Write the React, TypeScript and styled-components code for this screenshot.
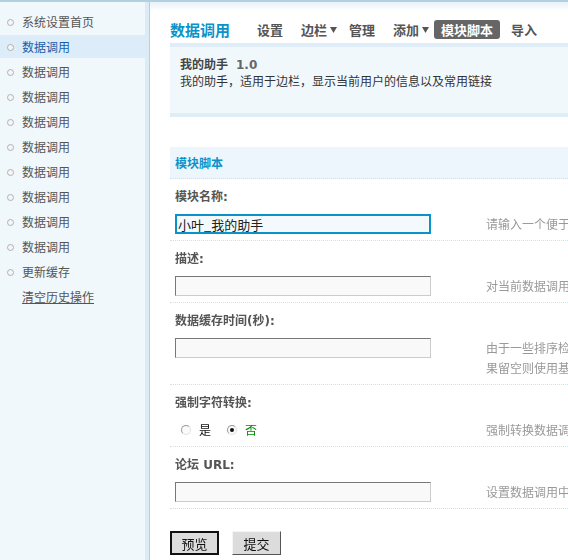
import React from "react";
import styled, { createGlobalStyle } from "styled-components";

const GlobalStyle = createGlobalStyle`
  html, body {
    margin: 0;
    padding: 0;
    overflow: hidden;
  }
  body {
    font-family: "DejaVu Sans", "Noto Sans CJK SC", sans-serif;
    font-size: 12px;
    color: #555;
    background: #fff;
  }
`;

const Page = styled.div`
  display: flex;
  min-height: 100vh;
  width: 900px;
  border-top: 2px solid #b4cfe0;
  background: linear-gradient(#e6f2f9, rgba(255, 255, 255, 0) 9px) top left / 100% 9px no-repeat;
`;

const Sidebar = styled.div`
  width: 149px;
  flex-shrink: 0;
  padding-top: 8px;
  border-right: 1px solid #b5d1e1;
  background: linear-gradient(to right, #f0f8fc 145px, #dcecf7 145px);
`;

const MenuList = styled.ul`
  list-style: none;
  margin: 0;
  padding: 0;
  width: 145px;
`;

const MenuItem = styled.li<{ $active?: boolean; $plain?: boolean }>`
  display: flex;
  align-items: center;
  height: 23px;
  margin-bottom: 2px;
  padding-left: 7px;
  font-family: "Noto Sans CJK SC", sans-serif;
  font-size: 12px;
  color: ${(p) => (p.$active ? "#1a5ea8" : "#555")};
  background: ${(p) => (p.$active ? "#dcecf8" : "transparent")};
  text-decoration: ${(p) => (p.$plain ? "underline" : "none")};
  padding-left: ${(p) => (p.$plain ? "22px" : "7px")};
`;

const Bullet = styled.span`
  width: 5px;
  height: 5px;
  border: 1px solid #b0b0b0;
  border-radius: 50%;
  background: #f6f6f6;
  margin-right: 8px;
  margin-top: 1px;
`;

const Main = styled.div`
  width: 640px;
  padding-left: 20px;
`;

const Header = styled.div`
  display: flex;
  align-items: flex-end;
  height: 41px;
  padding-bottom: 0;
  box-sizing: border-box;
  padding-bottom: 4px;
`;

const Title = styled.h1`
  margin: 0 20px 0 0;
  font-family: "Noto Sans CJK SC", sans-serif;
  font-size: 15px;
  font-weight: bold;
  line-height: 19px;
  color: #0b93c9;
`;

const Nav = styled.div`
  display: flex;
  gap: 4px;
`;

const NavItem = styled.span<{ $active?: boolean; $menu?: boolean }>`
  display: flex;
  align-items: center;
  height: 19px;
  padding: ${(p) => (p.$menu ? "0 1px 0 7px" : "0 7px")};
  border-radius: 3px;
  font-family: "Noto Sans CJK SC", sans-serif;
  font-size: 13px;
  font-weight: bold;
  color: ${(p) => (p.$active ? "#fff" : "#555")};
  background: ${(p) => (p.$active ? "#666" : "transparent")};
`;

const Arrow = styled.svg`
  margin-left: 3px;
  margin-top: 1px;
`;

const InfoBox = styled.div`
  border-top: 4px solid #deedf7;
  border-bottom: 4px solid #deedf7;
  background: #f1f8fc;
  padding: 9px 10px 24px;
  line-height: 16px;
  font-family: "Noto Sans CJK SC", sans-serif;
`;

const InfoTitle = styled.div`
  font-weight: bold;
  color: #444;
`;

const Version = styled.span`
  font-family: "DejaVu Sans", sans-serif;
  font-weight: bold;
  color: #666;
  margin-left: 8px;
`;

const InfoText = styled.div`
  color: #333;
`;

const SectionTitle = styled.div`
  margin-top: 30px;
  height: 31px;
  line-height: 31px;
  padding-left: 5px;
  background: #eef6fd;
  border-bottom: 1px dotted #c6e1f0;
  font-family: "Noto Sans CJK SC", sans-serif;
  font-weight: bold;
  color: #0b93c9;
`;

const FormRow = styled.div`
  padding: 9px 0 6px 5px;
  border-bottom: 1px dotted #c6e1f0;
`;

const Label = styled.div`
  height: 18px;
  line-height: 18px;
  margin-bottom: 8px;
  font-family: "DejaVu Sans", "Noto Sans CJK SC", sans-serif;
  font-weight: bold;
  color: #555;
`;

const FieldLine = styled.div`
  display: flex;
  align-items: flex-start;
`;

const Field = styled.div<{ $short?: boolean }>`
  width: 256px;
  height: ${(p) => (p.$short ? "19px" : "20px")};
  margin-right: 55px;
  flex-shrink: 0;
  display: flex;
  align-items: center;
`;

const TextInput = styled.input<{ $focus?: boolean }>`
  width: 256px;
  height: 20px;
  box-sizing: border-box;
  margin: 0;
  padding: 0 2px;
  font-family: "Noto Sans CJK SC", sans-serif;
  font-size: 13px;
  color: #222;
  outline: none;
  background: ${(p) => (p.$focus ? "#f4f9fd" : "#f9f9f9")};
  border: 1px solid;
  border-color: ${(p) =>
    p.$focus ? "#0b93c9" : "#777 #ccc #ccc #777"};
  box-shadow: ${(p) => (p.$focus ? "0 0 0 1px #0b93c9 inset" : "none")};
`;

const Hint = styled.div`
  line-height: 20px;
  white-space: nowrap;
  font-family: "Noto Sans CJK SC", sans-serif;
  color: #999;
`;

const RadioGroup = styled.div`
  display: flex;
  align-items: center;
  padding-left: 6px;
`;

const RadioOption = styled.label<{ $green?: boolean }>`
  display: flex;
  align-items: center;
  margin-right: 16px;
  font-family: "Noto Sans CJK SC", sans-serif;
  font-size: 12px;
  color: ${(p) => (p.$green ? "#008a00" : "#111")};
`;

const RadioDot = styled.span<{ $checked?: boolean }>`
  position: relative;
  width: 8px;
  height: 8px;
  margin-right: 8px;
  border-radius: 50%;
  border: 1px solid;
  border-color: #999 #e2e2e2 #e2e2e2 #999;
  background: #fafafa;

  &::after {
    content: "";
    display: ${(p) => (p.$checked ? "block" : "none")};
    position: absolute;
    left: 2px;
    top: 2px;
    width: 4px;
    height: 4px;
    border-radius: 50%;
    background: #111;
  }
`;

const Buttons = styled.div`
  display: flex;
  gap: 13px;
  margin-top: 22px;
`;

const Button = styled.button<{ $primary?: boolean }>`
  width: 49px;
  height: 24px;
  box-sizing: border-box;
  margin: 0;
  padding: 0;
  font-family: "Noto Sans CJK SC", sans-serif;
  font-size: 13px;
  color: #111;
  background: #dcdcdc;
  border: ${(p) => (p.$primary ? "2px solid #111" : "1px solid")};
  border-color: ${(p) => (p.$primary ? "#111" : "#f5f5f5 #555 #555 #f5f5f5")};
  border-radius: 0;
`;

const menu = [
  "系统设置首页",
  "数据调用",
  "数据调用",
  "数据调用",
  "数据调用",
  "数据调用",
  "数据调用",
  "数据调用",
  "数据调用",
  "数据调用",
  "更新缓存",
];

function DownArrow() {
  return (
    <Arrow width="7" height="6" viewBox="0 0 7 6">
      <polygon points="0,0 7,0 3.5,6" fill="#555" />
    </Arrow>
  );
}

export default function App() {
  return (
    <>
      <GlobalStyle />
      <Page>
        <Sidebar>
          <MenuList>
            {menu.map((item, i) => (
              <MenuItem key={i} $active={i === 1}>
                <Bullet />
                {item}
              </MenuItem>
            ))}
            <MenuItem $plain>清空历史操作</MenuItem>
          </MenuList>
        </Sidebar>

        <Main>
          <Header>
            <Title>数据调用</Title>
            <Nav>
              <NavItem>设置</NavItem>
              <NavItem $menu>
                边栏
                <DownArrow />
              </NavItem>
              <NavItem>管理</NavItem>
              <NavItem $menu>
                添加
                <DownArrow />
              </NavItem>
              <NavItem $active>模块脚本</NavItem>
              <NavItem>导入</NavItem>
            </Nav>
          </Header>

          <InfoBox>
            <InfoTitle>
              我的助手<Version>1.0</Version>
            </InfoTitle>
            <InfoText>我的助手，适用于边栏，显示当前用户的信息以及常用链接</InfoText>
          </InfoBox>

          <SectionTitle>模块脚本</SectionTitle>

          <FormRow>
            <Label>模块名称:</Label>
            <FieldLine>
              <Field>
                <TextInput $focus autoFocus defaultValue="小叶_我的助手" />
              </Field>
              <Hint>请输入一个便于识别的模块名称</Hint>
            </FieldLine>
          </FormRow>

          <FormRow>
            <Label>描述:</Label>
            <FieldLine>
              <Field>
                <TextInput />
              </Field>
              <Hint>对当前数据调用模块的功能描述</Hint>
            </FieldLine>
          </FormRow>

          <FormRow>
            <Label>数据缓存时间(秒):</Label>
            <FieldLine>
              <Field>
                <TextInput />
              </Field>
              <Hint>
                由于一些排序检索条件操作比较耗费资源，建议设置缓存时间，如
                <br />
                果留空则使用基本设置中的缓存时间
              </Hint>
            </FieldLine>
          </FormRow>

          <FormRow>
            <Label>强制字符转换:</Label>
            <FieldLine>
              <Field $short>
                <RadioGroup>
                  <RadioOption>
                    <RadioDot />是
                  </RadioOption>
                  <RadioOption $green>
                    <RadioDot $checked />否
                  </RadioOption>
                </RadioGroup>
              </Field>
              <Hint>强制转换数据调用的字符集</Hint>
            </FieldLine>
          </FormRow>

          <FormRow>
            <Label>论坛 URL:</Label>
            <FieldLine>
              <Field>
                <TextInput />
              </Field>
              <Hint>设置数据调用中链接的论坛地址</Hint>
            </FieldLine>
          </FormRow>

          <Buttons>
            <Button $primary>预览</Button>
            <Button>提交</Button>
          </Buttons>
        </Main>
      </Page>
    </>
  );
}
